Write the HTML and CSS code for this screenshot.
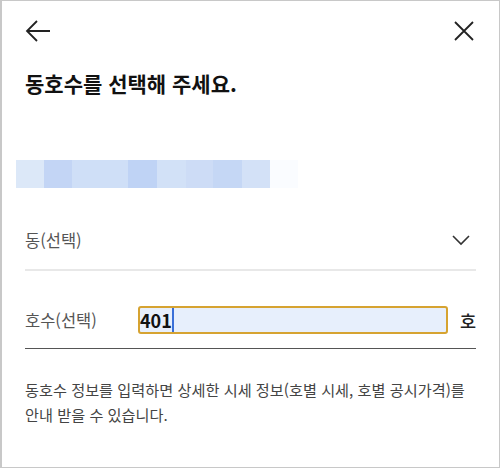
FILE: index.html
```html
<!DOCTYPE html>
<html lang="ko">
<head>
    <meta charset="UTF-8">
    <meta name="viewport" content="width=device-width, initial-scale=1.0">
    <title>동호수 선택</title>
    <link rel="stylesheet" href="styles.css">
</head>
<body>
    <div class="sheet">
        <div class="top-bar">
            <svg class="icon" width="26" height="24" viewBox="0 0 26 24">
                <path d="M25 12H2M12 2L2 12l10 10" fill="none" stroke="#222" stroke-width="1.8"/>
            </svg>
            <svg class="icon" width="22" height="22" viewBox="0 0 22 22">
                <path d="M2 2l18 18M20 2L2 20" fill="none" stroke="#222" stroke-width="1.8"/>
            </svg>
        </div>

        <h1 class="title">동호수를 선택해 주세요.</h1>

        <!-- 주소 (모자이크 처리) -->
        <div class="mosaic">
            <span class="m1"></span>
            <span class="m2"></span>
            <span class="m3"></span>
            <span class="m4"></span>
            <span class="m5"></span>
            <span class="m6"></span>
            <span class="m7"></span>
            <span class="m8"></span>
            <span class="m9"></span>
        </div>

        <div class="field dong">
            <span class="label">동(선택)</span>
            <svg width="20" height="12" viewBox="0 0 20 12">
                <path d="M2 2l8 8 8-8" fill="none" stroke="#333" stroke-width="1.6"/>
            </svg>
        </div>

        <div class="field ho">
            <span class="label">호수(선택)</span>
            <div class="ho-input"><span class="value">401</span><span class="caret"></span></div>
            <span class="unit">호</span>
        </div>

        <p class="info">동호수 정보를 입력하면 상세한 시세 정보(호별 시세, 호별 공시가격)를 안내 받을 수 있습니다.</p>
    </div>
</body>
</html>
```

FILE: styles.css
```css
* {
    box-sizing: border-box;
}
body {
    margin: 0;
    background: #fff;
    font-family: "Noto Sans CJK KR", "Noto Sans", sans-serif;
}
.sheet {
    width: 500px;
    height: 468px;
    border: 1px solid #c8c8c8;
    border-left-width: 2px;
    padding: 0 23px 0 23px;
    overflow: hidden;
}
.top-bar {
    height: 60px;
    display: flex;
    justify-content: space-between;
    align-items: center;
}
.icon {
    display: block;
}
.top-bar .icon:last-child {
    margin-right: 1px;
}
.title {
    margin: 8px 0 0;
    font-size: 21px;
    line-height: 28px;
    font-weight: 700;
    color: #111;
}
.mosaic {
    display: flex;
    height: 28px;
    margin: 63px 0 0 -9px;
}
.mosaic span {
    width: 28px;
}
.m1 { background: #dce8f8; }
.m2 { background: #c3d5f5; }
.m3 { background: #cfdff7; width: 56px !important; }
.m4 { background: #bfd3f5; width: 29px !important; }
.m5 { background: #d2e1f7; width: 29px !important; }
.m6 { background: #cddcf6; width: 27px !important; }
.m7 { background: #c5d7f5; width: 29px !important; }
.m8 { background: #d3e1f7; }
.m9 { background: #fafcff; }
.field {
    display: flex;
    align-items: center;
}
.label {
    font-size: 16.5px;
    color: #555;
}
.dong {
    margin-top: 36px;
    height: 47px;
    padding-bottom: 14px;
    justify-content: space-between;
    border-bottom: 2px solid #e8e8e8;
}
.dong svg {
    margin-right: 5px;
}
.ho {
    padding: 35px 0 14px;
    border-bottom: 1px solid #555;
}
.ho .label {
    width: 113px;
}
.ho-input {
    flex: 1;
    height: 28px;
    margin-right: 12px;
    border: 2px solid #d6a331;
    border-radius: 3px;
    background: #e7effc;
    display: flex;
    align-items: center;
}
.value {
    font-size: 18px;
    font-weight: 700;
    color: #111;
    line-height: 24px;
}
.caret {
    width: 2px;
    height: 24px;
    background: #3a6fd8;
}
.unit {
    font-size: 17.5px;
    font-weight: 500;
    color: #222;
}
.info {
    margin: 28px 0 0;
    font-size: 15.2px;
    line-height: 25px;
    color: #444;
}
```
